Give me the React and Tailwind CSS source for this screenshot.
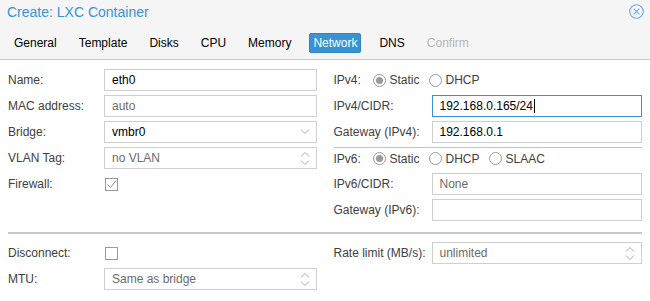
import React from "react";

function ChevronDown() {
  return (
    <svg width="10" height="6" viewBox="0 0 10 6" className="shrink-0">
      <path d="M1 0.5 L5 4.5 L9 0.5" fill="none" stroke="#a8a8a8" strokeWidth="1" />
    </svg>
  );
}

function Spin() {
  return (
    <svg width="10" height="13" viewBox="0 0 10 13" className="shrink-0">
      <path d="M1 4.5 L5 0.5 L9 4.5" fill="none" stroke="#a8a8a8" strokeWidth="1" />
      <path d="M1 8.5 L5 12.5 L9 8.5" fill="none" stroke="#a8a8a8" strokeWidth="1" />
    </svg>
  );
}

function Field({ value, muted, focused, trigger }) {
  return (
    <div
      className={`flex-1 h-[22px] flex items-center border bg-white pl-[7px] pr-[6px] ${
        focused ? "border-[#3892d4]" : "border-[#cfcfcf]"
      }`}
    >
      <span className={muted ? "text-[#6b6b6b]" : "text-black"}>{value}</span>
      {focused && <span className="inline-block w-px h-[14px] bg-black ml-[1px]" />}
      <div className="flex-1" />
      {trigger === "combo" && <ChevronDown />}
      {trigger === "spin" && <Spin />}
    </div>
  );
}

function Row({ label, lw = "w-[96px]", children, className = "" }) {
  return (
    <div className={`h-[22px] flex items-center ${className}`}>
      <div className={`${lw} shrink-0 text-[#404040]`}>{label}</div>
      {children}
    </div>
  );
}

function Radio({ checked, label }) {
  return (
    <div className="flex items-center mr-[9px]">
      <span className="w-[13px] h-[13px] rounded-full border border-[#9a9a9a] flex items-center justify-center bg-white">
        {checked && <span className="w-[7px] h-[7px] rounded-full bg-[#9a9a9a]" />}
      </span>
      <span className="ml-[4px] text-[#404040]">{label}</span>
    </div>
  );
}

function Checkbox({ checked }) {
  return (
    <span className="w-[13px] h-[13px] border border-[#9a9a9a] bg-white flex items-center justify-center ml-[1px]">
      {checked && (
        <svg width="11" height="11" viewBox="0 0 11 11">
          <path d="M1.5 5.5 L4.5 8.5 L10 1.5" fill="none" stroke="#8a8a8a" strokeWidth="1" />
        </svg>
      )}
    </span>
  );
}

export default function App() {
  const tabs = ["General", "Template", "Disks", "CPU", "Memory", "Network", "DNS", "Confirm"];
  return (
    <div className="w-[650px] h-[301px] bg-white font-['Liberation_Sans',Arial,sans-serif] text-[12px] leading-[14px] overflow-hidden">
      <div className="h-[60px] bg-[#f5f5f5] border-b border-[#c6c6c6]">
        <div className="h-[23px] flex items-center justify-between pl-[7px] pr-[6px]">
          <span className="text-[14px] text-[#3892d4]">Create: LXC Container</span>
          <svg width="15" height="15" viewBox="0 0 15 15">
            <circle cx="7.5" cy="7.5" r="6.8" fill="none" stroke="#6aaee6" strokeWidth="1.1" />
            <path d="M4.7 4.7 L10.3 10.3 M10.3 4.7 L4.7 10.3" stroke="#6aaee6" strokeWidth="1.1" />
          </svg>
        </div>
        <div className="mt-[10px] flex gap-[14px] pl-[10px]">
          {tabs.map((t) => (
            <div
              key={t}
              className={`h-[20px] flex items-center rounded-[2px] ${
                t === "Network"
                  ? "px-[3px] bg-[#3892d4] text-white border border-[#2f84c4]"
                  : t === "Confirm"
                  ? "px-[4px] text-[#b5b5b5]"
                  : "px-[4px] text-black"
              }`}
            >
              {t}
            </div>
          ))}
        </div>
      </div>

      <div className="px-[8px] pt-[9px]">
        <div className="grid grid-cols-2 gap-x-[17px] pb-[11px]">
          <div className="flex flex-col gap-[4px]">
            <Row label="Name:">
              <Field value="eth0" />
            </Row>
            <Row label="MAC address:">
              <Field value="auto" muted />
            </Row>
            <Row label="Bridge:">
              <Field value="vmbr0" trigger="combo" />
            </Row>
            <Row label="VLAN Tag:">
              <Field value="no VLAN" muted trigger="spin" />
            </Row>
            <Row label="Firewall:">
              <Checkbox checked />
            </Row>
          </div>
          <div className="flex flex-col gap-[4px]">
            <Row label="IPv4:" lw="w-[39px]">
              <Radio checked label="Static" />
              <Radio label="DHCP" />
            </Row>
            <Row label="IPv4/CIDR:" lw="w-[98px]">
              <Field value="192.168.0.165/24" focused />
            </Row>
            <Row label="Gateway (IPv4):" lw="w-[98px]">
              <Field value="192.168.0.1" />
            </Row>
            <Row label="IPv6:" lw="w-[39px]" className="border-t border-[#c4c4c4]">
              <Radio checked label="Static" />
              <Radio label="DHCP" />
              <Radio label="SLAAC" />
            </Row>
            <Row label="IPv6/CIDR:" lw="w-[98px]">
              <Field value="None" muted />
            </Row>
            <Row label="Gateway (IPv6):" lw="w-[98px]">
              <Field value="" />
            </Row>
          </div>
        </div>

        <div className="h-[2px] bg-[#c8c8c8]" />

        <div className="grid grid-cols-2 gap-x-[17px] pt-[8px]">
          <div className="flex flex-col gap-[4px]">
            <Row label="Disconnect:">
              <Checkbox />
            </Row>
            <Row label="MTU:">
              <Field value="Same as bridge" muted trigger="spin" />
            </Row>
          </div>
          <div className="flex flex-col gap-[4px]">
            <Row label="Rate limit (MB/s):" lw="w-[98px]">
              <Field value="unlimited" muted trigger="spin" />
            </Row>
          </div>
        </div>
      </div>
    </div>
  );
}
